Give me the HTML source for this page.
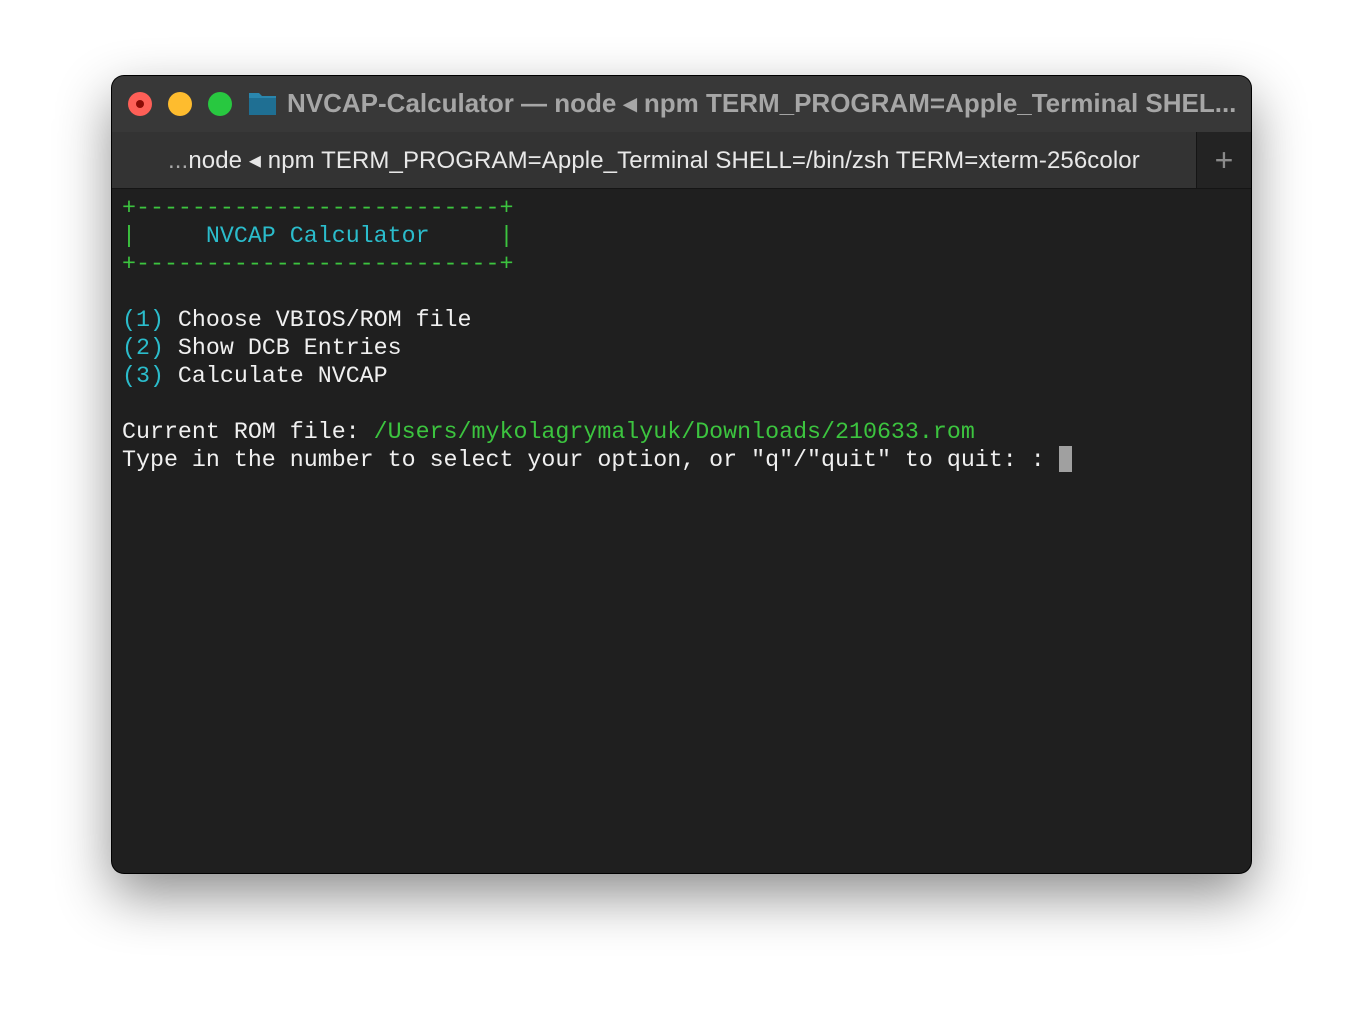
<!DOCTYPE html>
<html><head><style>
html,body{margin:0;padding:0;background:#fff;width:1364px;height:1022px;overflow:hidden}
.win{position:absolute;left:112px;top:76px;width:1139px;height:797px;border-radius:12px;background:#1f1f1f;box-shadow:0 22px 55px rgba(0,0,0,.45),0 0 0 1px #000;overflow:hidden}
.title{position:absolute;left:0;top:0;width:100%;height:56px;background:#383838}
.tabs{position:absolute;left:0;top:56px;width:100%;height:56px;background:#333;border-bottom:1px solid #151515}
.plus{position:absolute;right:0;top:0;width:54px;height:56px;background:#232323;border-left:1px solid #151515;color:#8a8a8a;font:32px "Liberation Sans",sans-serif;text-align:center;line-height:56px}
.dot{position:absolute;top:16px;width:24px;height:24px;border-radius:50%}
.tt{position:absolute;left:175px;top:12px;font:bold 26px "Liberation Sans",sans-serif;color:#a6a6a6;white-space:nowrap;letter-spacing:0}
.tab{position:absolute;left:56px;top:14px;font:24px "Liberation Sans",sans-serif;color:#e8e8e8;white-space:nowrap;letter-spacing:0.1px}
.term{position:absolute;left:10px;top:118px;font:23.3px/28px "Liberation Mono",monospace;color:#f0f0f0;white-space:pre}
.g{color:#3cc43f}.c{color:#2bbccb}
.cur{display:inline-block;width:13px;height:26px;background:#a0a0a0;vertical-align:-6px}
</style></head><body>
<div class="win">
<div class="title">
<div class="dot" style="left:16px;background:#fe5f57"><div style="position:absolute;left:8px;top:8px;width:8px;height:8px;border-radius:50%;background:#8c0b06"></div></div>
<div class="dot" style="left:56px;background:#febc2e"></div>
<div class="dot" style="left:96px;background:#28c840"></div>
<svg style="position:absolute;left:136px;top:15px" width="29" height="25"><path d="M1 2h10l3 3h14v19H1z" fill="#2a86ad"/><rect x="1" y="7" width="27" height="17" fill="#1f6f93"/></svg>
<div class="tt">NVCAP-Calculator — node ◂ npm TERM_PROGRAM=Apple_Terminal SHEL...</div>
</div>
<div class="tabs">
<div class="tab"><span style="color:#aaa">...</span>node ◂ npm TERM_PROGRAM=Apple_Terminal SHELL=/bin/zsh TERM=xterm-256color</div>
<div class="plus">+</div>
</div>
<div class="term"><span class="g">+--------------------------+</span>
<span class="g">|</span>     <span class="c">NVCAP Calculator</span>     <span class="g">|</span>
<span class="g">+--------------------------+</span>

<span class="c">(1)</span> Choose VBIOS/ROM file
<span class="c">(2)</span> Show DCB Entries
<span class="c">(3)</span> Calculate NVCAP

Current ROM file: <span class="g">/Users/mykolagrymalyuk/Downloads/210633.rom</span>
Type in the number to select your option, or "q"/"quit" to quit: : <span class="cur"></span></div>
</div>
</body></html>
